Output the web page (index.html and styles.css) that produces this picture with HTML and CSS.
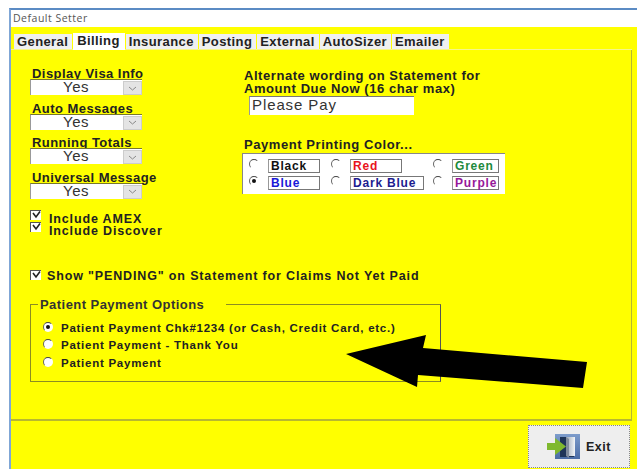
FILE: index.html
```html
<!DOCTYPE html>
<html lang="en">
<head>
<meta charset="utf-8">
<title>Default Setter</title>
<link rel="stylesheet" href="styles.css">
</head>
<body>
<div class="window">
  <div class="titlebar">Default Setter</div>
  <div class="client">
    <div class="tabs">
      <span class="tab">General</span>
      <span class="tab active">Billing</span>
      <span class="tab">Insurance</span>
      <span class="tab">Posting</span>
      <span class="tab">External</span>
      <span class="tab">AutoSizer</span>
      <span class="tab">Emailer</span>
    </div>
    <div class="panel">
      <div class="top">
        <div class="left">
          <div class="field"><div class="label">Display Visa Info</div><div class="combo"><span class="value">Yes</span><span class="drop"><svg width="9" height="5" viewBox="0 0 9 5"><path d="M1 1l3.500 3L8 1" fill="none" stroke="#888"/></svg></span></div></div>
          <div class="field"><div class="label">Auto Messages</div><div class="combo"><span class="value">Yes</span><span class="drop"><svg width="9" height="5" viewBox="0 0 9 5"><path d="M1 1l3.500 3L8 1" fill="none" stroke="#888"/></svg></span></div></div>
          <div class="field"><div class="label">Running Totals</div><div class="combo"><span class="value">Yes</span><span class="drop"><svg width="9" height="5" viewBox="0 0 9 5"><path d="M1 1l3.500 3L8 1" fill="none" stroke="#888"/></svg></span></div></div>
          <div class="field"><div class="label">Universal Message</div><div class="combo"><span class="value">Yes</span><span class="drop"><svg width="9" height="5" viewBox="0 0 9 5"><path d="M1 1l3.500 3L8 1" fill="none" stroke="#888"/></svg></span></div></div>
          <div class="checks">
            <div class="check"><span class="box"><svg width="9" height="9" viewBox="0 0 9 9"><path d="M1 2l3 4L8 0.500" fill="none" stroke="#222" stroke-width="1.600"/></svg></span><span>Include AMEX</span></div>
            <div class="check"><span class="box"><svg width="9" height="9" viewBox="0 0 9 9"><path d="M1 2l3 4L8 0.500" fill="none" stroke="#222" stroke-width="1.600"/></svg></span><span>Include Discover</span></div>
          </div>
        </div>
        <div class="right">
          <div class="heading">Alternate wording on Statement for<br>Amount Due Now (16 char max)</div>
          <div class="textbox">Please Pay</div>
          <div class="heading colorhead">Payment Printing Color...</div>
          <div class="colors">
            <div class="swatch"><span class="radio"></span><span class="name c-black">Black</span></div>
            <div class="swatch"><span class="radio"></span><span class="name c-red">Red</span></div>
            <div class="swatch"><span class="radio"></span><span class="name c-green">Green</span></div>
            <div class="swatch"><span class="radio on"></span><span class="name c-blue">Blue</span></div>
            <div class="swatch"><span class="radio"></span><span class="name wide c-navy">Dark Blue</span></div>
            <div class="swatch"><span class="radio"></span><span class="name c-purple">Purple</span></div>
          </div>
        </div>
      </div>
      <div class="check pending"><span class="box"><svg width="9" height="9" viewBox="0 0 9 9"><path d="M1 2l3 4L8 0.500" fill="none" stroke="#222" stroke-width="1.600"/></svg></span><span>Show "PENDING" on Statement for Claims Not Yet Paid</span></div>
      <fieldset class="options">
        <legend>Patient Payment Options</legend>
        <div class="option"><span class="radio on"></span><span>Patient Payment Chk#1234 (or Cash, Credit Card, etc.)</span></div>
        <div class="option"><span class="radio"></span><span>Patient Payment - Thank You</span></div>
        <div class="option"><span class="radio"></span><span>Patient Payment</span></div>
      </fieldset>
    </div>
    <div class="footer">
      <div class="exit">
        <svg width="33" height="25" viewBox="0 0 33 25">
          <defs>
            <linearGradient id="door-frame" x1="0" y1="0" x2="0" y2="1">
              <stop offset="0" stop-color="#7d9ccb"/>
              <stop offset="1" stop-color="#4a6ca6"/>
            </linearGradient>
            <linearGradient id="door-leaf" x1="0" y1="0" x2="1" y2="0">
              <stop offset="0" stop-color="#9aa6b6"/>
              <stop offset="1" stop-color="#f2f5f8"/>
            </linearGradient>
          </defs>
          <rect x="8" y="0" width="25" height="25" fill="url(#door-frame)"/>
          <path d="M13 3h14v20H13z" fill="#1f3558"/>
          <path d="M19 3h9v19h-9z" fill="url(#door-leaf)"/>
          <path d="M19 3l3 2v19l-3-2z" fill="#7f8b9c"/>
          <path d="M0 9h8V4l11 8.500L8 21v-5H0z" fill="#7fb92e"/>
        </svg>
        <span>Exit</span>
      </div>
    </div>
    <svg class="arrow" width="245" height="56" viewBox="0 0 245 56">
      <path d="M0 19L80 0 77 13 241 27 237 53 72 40 71 52z" fill="#000"/>
    </svg>
  </div>
</div>
</body>
</html>
```
FILE: styles.css
```css
* { box-sizing: border-box; }

html, body { height: 100%; }

body {
  margin: 0;
  padding: 8px 0 0 9px;
  background: #fff;
  overflow: hidden;
  font-family: "Liberation Sans", Arial, sans-serif;
  color: #111;
}

.window {
  height: 461px;
  border-top: 2px solid #5b8bc4;
  border-left: 2px solid #7fa6d6;
  display: flex;
  flex-direction: column;
}

.titlebar {
  height: 17px;
  padding: 1px 0 0 2px;
  background: #fff;
  font-family: "Open Sans", sans-serif;
  font-size: 10.500px;
  line-height: 15px;
  letter-spacing: 0.500px;
  color: #555;
}

.client {
  position: relative;
  flex: 1;
  display: flex;
  flex-direction: column;
  background: #ffff00;
}

.tabs {
  display: flex;
  height: 23px;
  margin-right: 5px;
  padding: 7px 0 0 3px;
  align-items: stretch;
  border-bottom: 1px solid #f6f68a;
}

.tab {
  padding: 0 4px 0 3px;
  margin-right: 1px;
  background: #f0f0f0;
  font-size: 13px;
  font-weight: 700;
  line-height: 16px;
  letter-spacing: 0.400px;
  color: #222;
}

.tab.active {
  margin-top: -1px;
  margin-bottom: -1px;
  padding: 0 5px 0 4px;
  background: #fff;
  line-height: 16px;
}

.panel {
  height: 371px;
  margin-right: 5px;
  padding: 17px 0 0 19px;
  border-right: 1px solid #b8b830;
  border-bottom: 2px solid #b8b830;
}

.top { display: flex; }

.left { width: 214px; }

/* Labels sit tight on their combo, which paints over the descenders */
.label {
  height: 12px;
  padding-left: 2px;
  font-size: 13px;
  font-weight: 700;
  line-height: 14px;
  letter-spacing: 0.450px;
  color: #222;
}

.field { margin-bottom: 6.600px; }

.combo {
  position: relative;
  display: flex;
  width: 112px;
  height: 16px;
  background: #fff;
  border-left: 1px solid #999;
  border-top: 1px solid #77772a;
}

.value {
  flex: 1;
  padding-left: 32px;
  font-size: 15px;
  line-height: 14px;
  letter-spacing: 0.500px;
  color: #333;
}

.drop {
  width: 19px;
  margin: 1px 0 0;
  background: #e4e4e4;
  border: 1px solid #ccc;
  display: flex;
  align-items: center;
  justify-content: center;
}

.checks { margin-top: 14px; }

.check {
  display: flex;
  align-items: center;
  gap: 8px;
  height: 12px;
  font-size: 12.500px;
  font-weight: 700;
  letter-spacing: 0.850px;
  color: #222;
}

.box {
  width: 11px;
  height: 10px;
  margin-top: -8px;
  background: #fff;
  border-top: 1px solid #555;
  border-left: 1px solid #555;
  display: flex;
  align-items: center;
  justify-content: center;
  flex: none;
}

.right { padding-top: 2px; }

.heading {
  font-size: 13px;
  font-weight: 700;
  line-height: 13px;
  letter-spacing: 0.560px;
  color: #222;
}

.textbox {
  width: 165px;
  height: 19px;
  margin: 1px 0 0 5px;
  padding-left: 2px;
  background: #fff;
  border-left: 1px solid #999;
  border-top: 1px solid #777;
  font-size: 15px;
  line-height: 16px;
  letter-spacing: 0.900px;
  color: #333;
}

.colorhead { margin-top: 23px; }

.colors {
  display: grid;
  grid-template-columns: 82px 102px 66px;
  grid-auto-rows: 17px;
  width: 263px;
  height: 41px;
  margin: 2px 0 0 -2px;
  padding: 3px 0 0 6px;
  background: #fff;
  border-left: 1px solid #888;
  border-top: 1px solid #888;
}

.swatch {
  display: flex;
  align-items: center;
  gap: 9px;
}

.name {
  display: block;
  width: 52px;
  height: 14px;
  padding-left: 2px;
  border: 1px solid #777;
  border-left-color: #999;
  font-size: 12px;
  font-weight: 700;
  line-height: 13px;
  letter-spacing: 0.800px;
  white-space: nowrap;
}

.name.wide { width: 74px; }

.c-black { color: #111; }
.c-red { color: #e8141c; }
.c-green { color: #1e8a3c; }
.c-blue { color: #1818d8; }
.c-navy { color: #1c1c90; }
.c-purple { color: #96189a; }

.radio {
  position: relative;
  flex: none;
  width: 10px;
  height: 10px;
  margin-top: -4px;
  border-radius: 50%;
  background: #fff;
  border: 1px solid transparent;
  border-top-color: #444;
  border-left-color: #666;
}

.radio.on::after {
  content: "";
  position: absolute;
  left: 2px;
  top: 2px;
  width: 4px;
  height: 4px;
  border-radius: 50%;
  background: #111;
}

.pending {
  margin-top: 33px;
  gap: 6px;
}

.pending .box { margin-top: -2px; }

.options {
  width: 411px;
  height: 84px;
  margin: 16px 0 0;
  padding: 8px 0 0 12px;
  border: 1px solid #8c8c22;
  border-right-color: #555;
}

.options legend {
  margin-left: -5px;
  padding: 0 22px 0 2px;
  font-size: 13px;
  font-weight: 700;
  letter-spacing: 0.450px;
  line-height: 13px;
  color: #333;
}

.option {
  display: flex;
  align-items: center;
  gap: 8px;
  height: 17.500px;
  font-size: 11.500px;
  font-weight: 700;
  letter-spacing: 0.740px;
  color: #222;
}

.option .radio { margin-top: -2px; }

.footer {
  flex: 1;
  display: flex;
  justify-content: flex-end;
  align-items: flex-start;
  padding: 4px 7px 0 0;
}

.exit {
  width: 102px;
  height: 43px;
  display: flex;
  align-items: center;
  justify-content: center;
  gap: 6px;
  background: #eeeeee;
  border: 1px dotted #888;
  font-size: 12.500px;
  font-weight: 700;
  letter-spacing: 0.500px;
  color: #222;
}

.arrow {
  position: absolute;
  left: 335px;
  top: 308px;
}
```
